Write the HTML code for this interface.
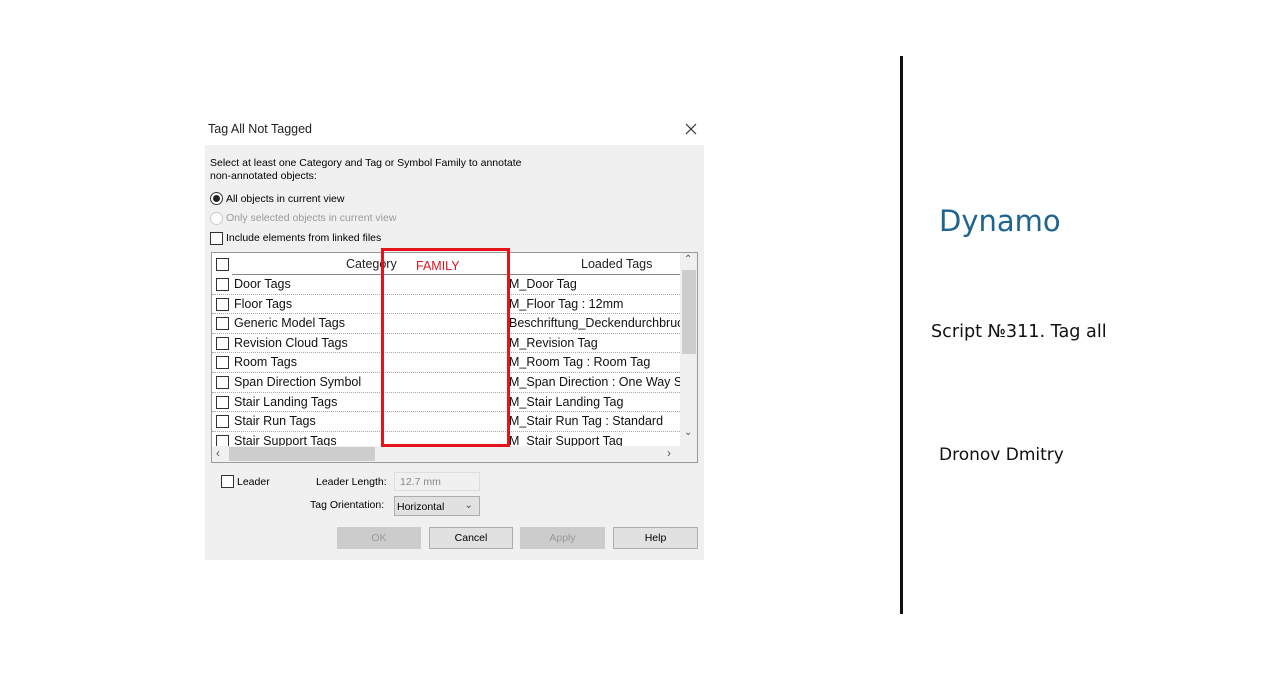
<!DOCTYPE html>
<html><head><meta charset="utf-8"><style>
*{margin:0;padding:0;box-sizing:border-box}
body{width:1275px;height:675px;background:#fff;position:relative;overflow:hidden;font-family:"Liberation Sans",sans-serif}
.a{position:absolute;white-space:nowrap}
.s{font-size:10.5px;color:#000}
.cb{position:absolute;width:13px;height:13px;border:1px solid #333;background:#fff}
.row{position:absolute;left:0;width:468px;height:19.6px;border-bottom:1px dotted #aaa;font-size:12.5px;color:#111}
.row .c{position:absolute;left:22px;top:2px}
.row .t{position:absolute;left:297px;top:2px;width:171px;overflow:hidden}
.btn{position:absolute;top:527px;height:22px;border:1px solid #adadad;background:#e1e1e1;font-size:10.5px;text-align:center;line-height:21px}
.dv{font-family:"DejaVu Sans",sans-serif}
</style></head><body>
<div class="a" style="left:208px;top:122px;font-size:12.5px;color:#222">Tag All Not Tagged</div>
<svg class="a" style="left:685px;top:123px" width="12" height="12"><path d="M1 1L11 11M11 1L1 11" stroke="#333" stroke-width="1.2"/></svg>
<div class="a" style="left:205px;top:145px;width:499px;height:415px;background:#f0f0f0"></div>
<div class="a s" style="left:210px;top:157px;line-height:13px">Select at least one Category and Tag or Symbol Family to annotate<br>non-annotated objects:</div>
<div class="a" style="left:210px;top:192px;width:13px;height:13px;border-radius:50%;border:1px solid #333;background:#fff"><div style="position:absolute;left:2px;top:2px;width:7px;height:7px;border-radius:50%;background:#222"></div></div>
<div class="a s" style="left:226px;top:193px">All objects in current view</div>
<div class="a" style="left:210px;top:212px;width:13px;height:13px;border-radius:50%;border:1px solid #ccc;background:#fff"></div>
<div class="a s" style="left:226px;top:212px;color:#999">Only selected objects in current view</div>
<div class="cb" style="left:210px;top:232px"></div>
<div class="a s" style="left:226px;top:232px">Include elements from linked files</div>

<div class="a" style="left:211px;top:252px;width:487px;height:211px;border:1px solid #999;background:#fff;overflow:hidden">
  <div class="cb" style="left:4px;top:5px"></div>
  <div class="a" style="left:134px;top:4px;font-size:12.5px;color:#222">Category</div>
  <div class="a" style="left:369px;top:4px;font-size:12.5px;color:#222">Loaded Tags</div>
  <div class="a" style="left:20px;top:21px;width:448px;border-bottom:1px solid #888"></div>
  <div class="a" style="left:0;top:22px;width:468px;height:172px;overflow:hidden">
   <div class="row" style="top:0"><div class="cb" style="left:4px;top:3px"></div><span class="c">Door Tags</span><span class="t">M_Door Tag</span></div>
   <div class="row" style="top:19.6px"><div class="cb" style="left:4px;top:3px"></div><span class="c">Floor Tags</span><span class="t">M_Floor Tag : 12mm</span></div>
   <div class="row" style="top:39.2px"><div class="cb" style="left:4px;top:3px"></div><span class="c">Generic Model Tags</span><span class="t">Beschriftung_Deckendurchbruch</span></div>
   <div class="row" style="top:58.8px"><div class="cb" style="left:4px;top:3px"></div><span class="c">Revision Cloud Tags</span><span class="t">M_Revision Tag</span></div>
   <div class="row" style="top:78.4px"><div class="cb" style="left:4px;top:3px"></div><span class="c">Room Tags</span><span class="t">M_Room Tag : Room Tag</span></div>
   <div class="row" style="top:98px"><div class="cb" style="left:4px;top:3px"></div><span class="c">Span Direction Symbol</span><span class="t">M_Span Direction : One Way Slab</span></div>
   <div class="row" style="top:117.6px"><div class="cb" style="left:4px;top:3px"></div><span class="c">Stair Landing Tags</span><span class="t">M_Stair Landing Tag</span></div>
   <div class="row" style="top:137.2px"><div class="cb" style="left:4px;top:3px"></div><span class="c">Stair Run Tags</span><span class="t">M_Stair Run Tag : Standard</span></div>
   <div class="row" style="top:156.8px"><div class="cb" style="left:4px;top:3px"></div><span class="c">Stair Support Tags</span><span class="t">M_Stair Support Tag</span></div>
  </div>
  <div class="a" style="left:468px;top:0;width:18px;height:193px;background:#f0f0f0"></div>
  <div class="a" style="left:470px;top:17px;width:14px;height:84px;background:#cdcdcd"></div>
  <div class="a" style="left:472px;top:1px;font-size:10px;color:#555">&#8963;</div>
  <div class="a" style="left:472px;top:174px;font-size:10px;color:#555">&#8964;</div>
  <div class="a" style="left:0;top:193px;width:486px;height:17px;background:#f0f0f0"></div>
  <div class="a" style="left:17px;top:194px;width:146px;height:14px;background:#cdcdcd"></div>
  <div class="a" style="left:4px;top:193px;font-size:12px;color:#555">&lsaquo;</div>
  <div class="a" style="left:455px;top:193px;font-size:12px;color:#555">&rsaquo;</div>
</div>
<div class="a" style="left:381px;top:248px;width:129px;height:199px;border:3px solid #e5141b"></div>
<div class="a" style="left:416px;top:259px;font-size:12.5px;color:#e5141b">FAMILY</div>

<div class="cb" style="left:221px;top:475px"></div>
<div class="a s" style="left:237px;top:476px">Leader</div>
<div class="a s" style="left:316px;top:476px">Leader Length:</div>
<div class="a" style="left:394px;top:472px;width:86px;height:19px;border:1px solid #ddd;background:#f0f0f0;font-size:10.5px;color:#888;padding:3px 0 0 5px">12.7 mm</div>
<div class="a s" style="left:310px;top:499px">Tag Orientation:</div>
<div class="a" style="left:394px;top:496px;width:86px;height:20px;border:1px solid #adadad;background:#e1e1e1;font-size:10.5px;padding:4px 0 0 2px">Horizontal<span style="position:absolute;right:6px;top:2px;color:#555">&#8964;</span></div>
<div class="btn" style="left:337px;width:84px;color:#999;border-color:#ccc;background:#ccc">OK</div>
<div class="btn" style="left:429px;width:84px">Cancel</div>
<div class="btn" style="left:520px;width:85px;color:#999;border-color:#ccc;background:#ccc">Apply</div>
<div class="btn" style="left:613px;width:85px">Help</div>

<div class="a" style="left:900px;top:56px;width:3px;height:558px;background:#111"></div>
<div class="a dv" style="left:939px;top:204px;font-size:29px;color:#1f6391">Dynamo</div>
<div class="a dv" style="left:931px;top:322px;font-size:17.6px;color:#111">Script №311. Tag all</div>
<div class="a dv" style="left:939px;top:445px;font-size:17px;color:#111">Dronov Dmitry</div>
</body></html>
